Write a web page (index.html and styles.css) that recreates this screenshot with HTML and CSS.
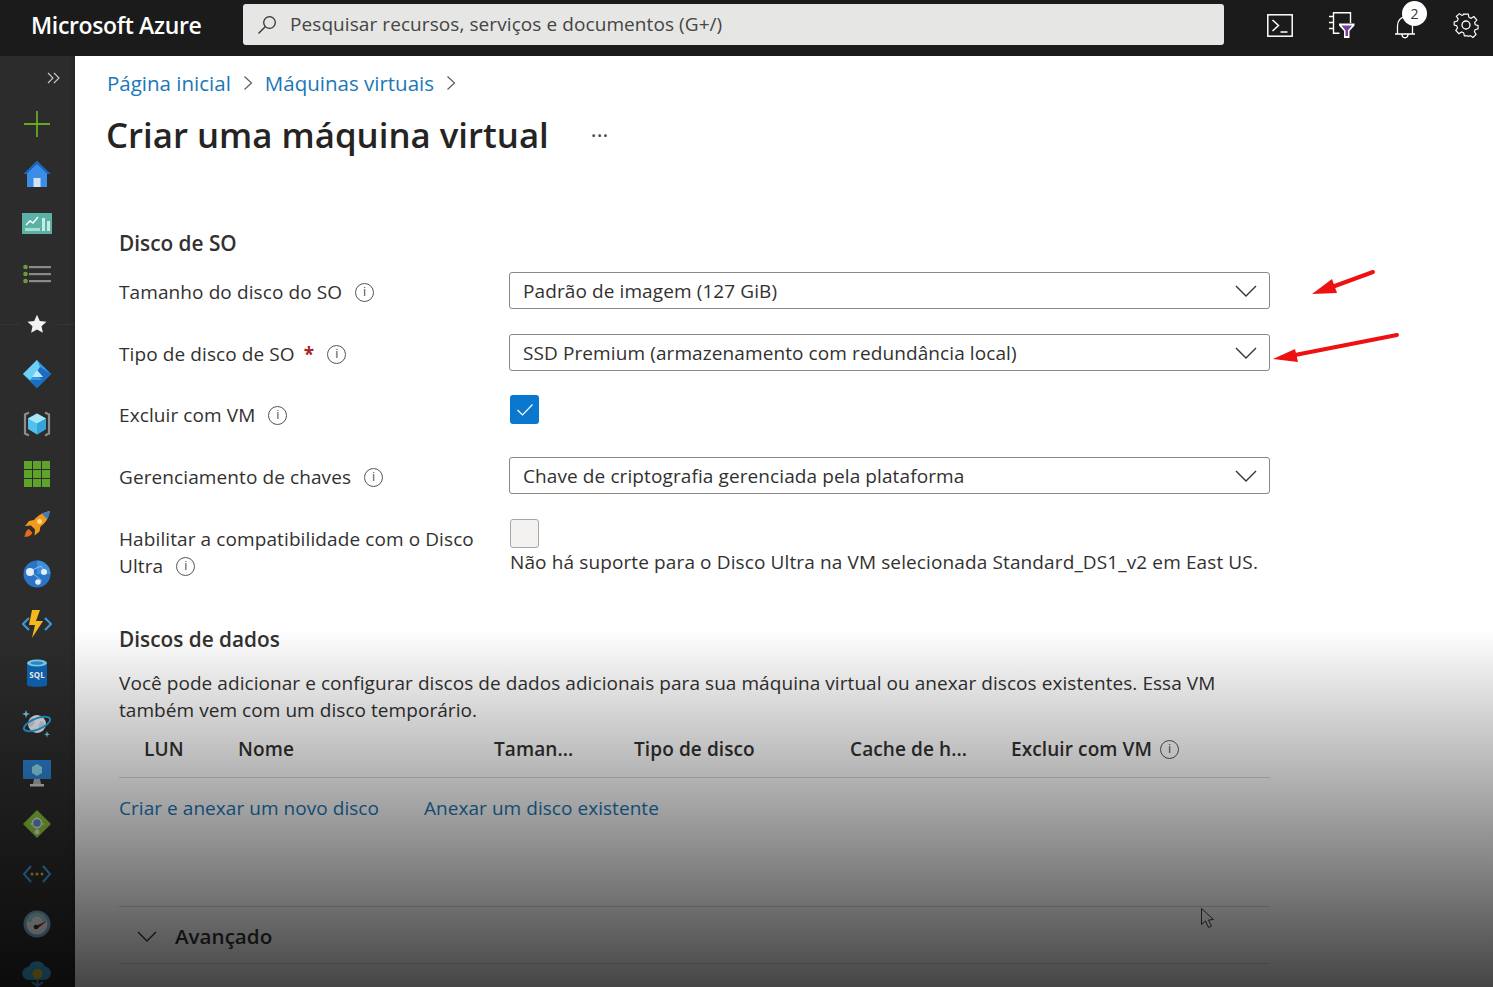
FILE: index.html
```html
<!DOCTYPE html>
<html lang="pt-BR">
<head>
    <meta charset="UTF-8">
    <meta name="viewport" content="width=device-width, initial-scale=1.0">
    <title>Criar uma máquina virtual - Microsoft Azure</title>
    <link rel="stylesheet" href="styles.css">
</head>
<body>
    <header class="topbar">
        <div class="brand">Microsoft Azure</div>
        <div class="search">
            <svg class="search-icon" width="20" height="20" viewBox="0 0 20 20" fill="none" stroke="#333" stroke-width="1.3"><circle cx="12.5" cy="7.5" r="5.8"/><path d="M8.2 11.8 1.5 18.5"/></svg>
            <span>Pesquisar recursos, serviços e documentos (G+/)</span>
        </div>
        <div class="top-icons">
            <svg class="shell-icon" width="26" height="23" viewBox="0 0 26 23" fill="none" stroke="#fff" stroke-width="1.5"><rect x=".8" y=".8" width="24.400" height="21.400"/><path d="M5.500 6l6 5.500-6 5.500M13.500 18h7"/></svg>
            <svg class="filter-icon" width="26" height="26" viewBox="0 0 26 26" fill="none"><path d="M21.500 11V.8H4.500v20.400h6M4.500.8v20.400M0 4.500h4.500M0 10.500h4.500M0 16.500h4.500" stroke="#fff" stroke-width="1.400"/><path d="M10 11.500h15.500v2L20.500 19v7h-5.500v-7L10 13.500z" fill="#fff"/><path d="M12.500 13.500h10.500L19 18.500v5.500h-2.500v-5.500z" fill="#7b3fa0"/></svg>
            <div class="bell">
                <svg width="24" height="26" viewBox="0 0 24 26" fill="none" stroke="#fff" stroke-width="1.3"><path d="M2 21h20M4.500 21v-8c0-5 3-9 7.500-9s7.500 4 7.500 9v8M9 21c0 5 6 5 6 0"/></svg>
                <span class="badge">2</span>
            </div>
            <svg class="gear-icon" width="28" height="28" viewBox="0 0 28 28" fill="none" stroke="#fff" stroke-width="1.3"><circle cx="14" cy="14" r="4"/><path d="M11.500 2h5l.8 3.600 2.300 1 3.200-2 3.200 3.900-2.400 2.800.7 2.400 3.100.9v3.700l-3.300 1-.8 2.200 1.900 3-3.500 3.300-3-2-2.200.9L15.800 26h-3.600l-.8-3.300-2.400-1-2.900 1.900-3.400-3.500 1.900-2.900-1-2.300L.9 14v-3.500l3.500-.9.900-2.400-2-2.800 3.400-3 2.900 1.900 2.100-.9z" transform="translate(1.400 1.400) scale(.9)"/></svg>
        </div>
    </header>

    <div class="shell">
        <nav class="sidebar">
            <div class="nav-collapse">
                <svg width="14" height="12" viewBox="0 0 14 12" fill="none" stroke="#ccc" stroke-width="1.100"><path d="M1 1l5 5-5 5M7 1l5 5-5 5"/></svg>
            </div>
            <div class="nav-item">
                <svg width="28" height="28" viewBox="0 0 28 28" stroke="#68a820" stroke-width="1.800"><path d="M14 1v26M1 14h26"/></svg>
            </div>
            <div class="nav-item">
                <svg width="30" height="30" viewBox="0 0 30 30"><path d="M15 2 1.500 15H5v13h20V15h3.500z" fill="#3b8ee8"/><path d="M15 2 1.500 15h3L15 5l10.500 10h3z" fill="#1a62b8"/><rect x="11.500" y="19" width="7" height="9" fill="#d5e4f5"/></svg>
            </div>
            <div class="nav-item">
                <svg width="30" height="22" viewBox="0 0 30 22"><rect x="0" y="0" width="30" height="21" fill="#5bb2a4"/><path d="M4 12l4-4 3 2 5-6" fill="none" stroke="#fff" stroke-width="1.400"/><rect x="3" y="15" width="15" height="3" fill="#a8dcd2"/><rect x="20" y="5" width="3" height="13" fill="#c5ebe4"/><rect x="25" y="8" width="3" height="10" fill="#c5ebe4"/></svg>
            </div>
            <div class="nav-item">
                <svg width="30" height="20" viewBox="0 0 30 20"><g fill="#6f9a3e"><circle cx="3.500" cy="3" r="2.300"/><circle cx="3.500" cy="10" r="2.300"/><circle cx="3.500" cy="17" r="2.300"/></g><g fill="#8a8a8a"><rect x="7" y="2" width="22" height="2.200"/><rect x="7" y="9" width="22" height="2.200"/><rect x="7" y="16" width="22" height="2.200"/></g></svg>
            </div>
            <div class="nav-item nav-star">
                <svg width="20" height="20" viewBox="0 0 20 20"><path d="M10 .8l2.800 6.200 6.700.7-5 4.500 1.400 6.600L10 15.400l-5.900 3.400 1.400-6.600-5-4.500 6.700-.7z" fill="#f2f2f2"/></svg>
            </div>
            <div class="nav-item">
                <svg width="28" height="28" viewBox="0 0 28 28"><path d="M14 0 0 14l14 14 14-14z" fill="#2f9be8"/><path d="M14 0 0 14l7 6L17 7z" fill="#6fd0f6"/><path d="M17 7l11 7-14 14-7-8 12 0-6-6z" fill="#1b6cc4"/><path d="M14 10l6 7H9z" fill="#bfe8fa"/></svg>
            </div>
            <div class="nav-item">
                <svg width="30" height="28" viewBox="0 0 30 28"><path d="M7 2.500 3 4.500v19l4 2M23 2.500l4 2v19l-4 2" fill="none" stroke="#8c8c8c" stroke-width="2.200"/><path d="M15 3.500l9 5v10.500l-9 5.500-9-5.500V8.500z" fill="#52c0ec"/><path d="M15 3.500l9 5-9 5-9-5z" fill="#a8e6f8"/><path d="M15 13.500v11l9-5.500V8.500z" fill="#34a4dc"/></svg>
            </div>
            <div class="nav-item">
                <svg width="26" height="26" viewBox="0 0 26 26" fill="#5ea32a"><rect width="8" height="8"/><rect x="9" width="8" height="8"/><rect x="18" width="8" height="8"/><rect y="9" width="8" height="8"/><rect x="9" y="9" width="8" height="8"/><rect x="18" y="9" width="8" height="8"/><rect y="18" width="8" height="8"/><rect x="9" y="18" width="8" height="8"/><rect x="18" y="18" width="8" height="8"/></svg>
            </div>
            <div class="nav-item">
                <svg width="28" height="28" viewBox="0 0 28 28" fill="#f29a1f"><path d="M27 1c-6 1-12 4-16 9l-5 1-4 5 6-.5 4 4-.5 6 5-4 1-5c6-4 8-9 9.500-15.500z"/><path d="M27 1c-3 .5-6 1.500-8 3l5 5c1.500-2 2.500-5 3-8z" fill="#3c7dbd"/><path d="M6 19c-3 1-4 5-4.500 8 3 0 6-1 8-4z" fill="#e8691c"/><circle cx="16.500" cy="11.500" r="2.500" fill="#ffd78a"/></svg>
            </div>
            <div class="nav-item">
                <svg width="28" height="28" viewBox="0 0 28 28"><circle cx="14" cy="14" r="13.500" fill="#2b74c8"/><path d="M14 .5A13.500 13.500 0 0 1 27.500 14L14 14z" fill="#3f8fdc"/><path d="M7 11 18 6M7 11l12 10M18 6l5 7" stroke="#8fc0ee" stroke-width="1" fill="none"/><circle cx="7" cy="12" r="4" fill="#e4eef9"/><circle cx="21" cy="12" r="3" fill="#e4eef9"/><circle cx="15" cy="22" r="2.800" fill="#e4eef9"/></svg>
            </div>
            <div class="nav-item">
                <svg width="30" height="28" viewBox="0 0 30 28"><path d="M7 8 1 14l6 6M23 8l6 6-6 6" fill="none" stroke="#3a9bd6" stroke-width="2"/><path d="M18 0h-8l-3 15h6l-3 13 11-17h-7z" fill="#f6b91d"/></svg>
            </div>
            <div class="nav-item">
                <svg width="22" height="30" viewBox="0 0 22 30"><path d="M1 4v22c0 2.500 20 2.500 20 0V4z" fill="#0f68b8"/><ellipse cx="11" cy="4" rx="10" ry="3.500" fill="#7fd4f0"/><ellipse cx="11" cy="4" rx="6.500" ry="1.700" fill="#2a8fcf"/><text x="11" y="19" class="sql-text">SQL</text></svg>
            </div>
            <div class="nav-item">
                <svg width="30" height="28" viewBox="0 0 30 28"><circle cx="15" cy="14" r="9" fill="#e8eef5"/><path d="M8 8c3-2 6 2 4 6s-5 3-6 0M18 12c3-2 5 1 4 4s-5 5-6 2" fill="#c5d3e2"/><ellipse cx="15" cy="14" rx="14" ry="5.500" fill="none" stroke="#2a9bd8" stroke-width="2" transform="rotate(-22 15 14)"/><path d="M4 0l1 3 3 1-3 1-1 3-1-3-3-1 3-1zM25 21l.8 2.500 2.500.8-2.500.8-.8 2.500-.8-2.500-2.500-.8 2.500-.8z" fill="#7fd4f0"/></svg>
            </div>
            <div class="nav-item">
                <svg width="28" height="28" viewBox="0 0 28 28"><rect width="28" height="19" fill="#2e82d6"/><path d="M14 4l5 3v6l-5 3-5-3V7z" fill="#8fdcec"/><path d="M11 19h6l1 5h-8z" fill="#b0b0b0"/><rect x="7" y="24" width="14" height="2.500" fill="#cfcfcf"/></svg>
            </div>
            <div class="nav-item">
                <svg width="30" height="30" viewBox="0 0 30 30"><path d="M15 1 29 15 15 29 1 15z" fill="#8cc63f"/><path d="M15 8v14M8 15h14" stroke="#d3e6b0" stroke-width="1.400"/><circle cx="15" cy="14" r="4.500" fill="#5a8ed0" stroke="#e4efd3" stroke-width="1.400"/><circle cx="15" cy="23" r="2.500" fill="#e4efd3"/></svg>
            </div>
            <div class="nav-item">
                <svg width="30" height="20" viewBox="0 0 30 20"><path d="M9 2 2 10l7 8M21 2l7 8-7 8" fill="none" stroke="#3c9fe4" stroke-width="2"/><g fill="#d9c233"><circle cx="10" cy="10" r="1.500"/><circle cx="15" cy="10" r="1.500"/><circle cx="20" cy="10" r="1.500"/></g></svg>
            </div>
            <div class="nav-item">
                <svg width="28" height="28" viewBox="0 0 28 28"><circle cx="14" cy="14" r="13.500" fill="#7fa9cc"/><circle cx="14" cy="14" r="10.500" fill="#f2f2f2"/><path d="M4.500 12a9.500 9.500 0 0 1 19 0h-4a5.500 5.500 0 0 0-11 0z" fill="#9fd8d8"/><path d="M12 16 24 11l-10 8z" fill="#a03040"/><circle cx="13" cy="17" r="2.300" fill="#333"/></svg>
            </div>
            <div class="nav-item">
                <svg width="30" height="30" viewBox="0 0 30 30"><path d="M7 21a6.500 6.500 0 0 1-.5-13A9 9 0 0 1 23 7.500 6.800 6.800 0 0 1 23 21z" fill="#3fb0e0"/><circle cx="15.500" cy="15" r="5" fill="#f0c32e"/><path d="M15.500 20v10M10 23l5.500 4 5.500-4" stroke="#3fb0e0" stroke-width="2" fill="none"/></svg>
            </div>
        </nav>

        <main class="content">
            <div class="breadcrumb">
                <a href="#">Página inicial</a>
                <svg width="10" height="16" viewBox="0 0 10 16" fill="none" stroke="#555" stroke-width="1.100"><path d="M1.500 1.500 8.500 8l-7 6.500"/></svg>
                <a href="#">Máquinas virtuais</a>
                <svg width="10" height="16" viewBox="0 0 10 16" fill="none" stroke="#555" stroke-width="1.100"><path d="M1.500 1.500 8.500 8l-7 6.500"/></svg>
            </div>
            <div class="title-row">
                <h1>Criar uma máquina virtual</h1>
                <span class="more">···</span>
            </div>

            <section class="form">
                <h2 class="section-first">Disco de SO</h2>

                <div class="form-row">
                    <label>Tamanho do disco do SO <i class="info">i</i></label>
                    <div class="select">Padrão de imagem (127 GiB)<svg width="22" height="12" viewBox="0 0 22 12" fill="none" stroke="#333" stroke-width="1.400"><path d="M1 1l10 10L21 1"/></svg></div>
                </div>
                <div class="form-row">
                    <label>Tipo de disco de SO <b class="req">*</b> <i class="info">i</i></label>
                    <div class="select">SSD Premium (armazenamento com redundância local)<svg width="22" height="12" viewBox="0 0 22 12" fill="none" stroke="#333" stroke-width="1.400"><path d="M1 1l10 10L21 1"/></svg></div>
                </div>
                <div class="form-row row-check">
                    <label>Excluir com VM <i class="info">i</i></label>
                    <div class="checkbox checked">
                        <svg width="18" height="14" viewBox="0 0 18 14" fill="none" stroke="#fff" stroke-width="1.200"><path d="M1.500 7l5 5L16.500 1.500"/></svg>
                    </div>
                </div>
                <div class="form-row">
                    <label>Gerenciamento de chaves <i class="info">i</i></label>
                    <div class="select">Chave de criptografia gerenciada pela plataforma<svg width="22" height="12" viewBox="0 0 22 12" fill="none" stroke="#333" stroke-width="1.400"><path d="M1 1l10 10L21 1"/></svg></div>
                </div>
                <div class="form-row row-ultra">
                    <label>Habilitar a compatibilidade com o Disco Ultra <i class="info">i</i></label>
                    <div>
                        <div class="checkbox"></div>
                        <p class="hint">Não há suporte para o Disco Ultra na VM selecionada Standard_DS1_v2 em East US.</p>
                    </div>
                </div>

                <h2 class="section-data">Discos de dados</h2>
                <p class="desc">Você pode adicionar e configurar discos de dados adicionais para sua máquina virtual ou anexar discos existentes. Essa VM também vem com um disco temporário.</p>

                <div class="disk-head">
                    <span>LUN</span>
                    <span>Nome</span>
                    <span>Taman...</span>
                    <span>Tipo de disco</span>
                    <span>Cache de h...</span>
                    <span>Excluir com VM<i class="info">i</i></span>
                </div>
                <div class="disk-links">
                    <a href="#">Criar e anexar um novo disco</a>
                    <a href="#">Anexar um disco existente</a>
                </div>

                <div class="advanced">
                    <svg width="20" height="11" viewBox="0 0 20 11" fill="none" stroke="#333" stroke-width="1.400"><path d="M1 1l9 9 9-9"/></svg>
                    <span>Avançado</span>
                </div>
            </section>
        </main>
    </div>

    <!-- fade over the bottom of the page, as in the video frame -->
    <div class="fade"></div>

    <!-- red arrows and mouse pointer drawn on top of the capture -->
    <svg class="marks" width="1493" height="987" viewBox="0 0 1493 987">
        <path d="M1373 272 1332 287" stroke="#ee1111" stroke-width="4" stroke-linecap="round"/>
        <path d="M1312 294 1332 279 1337 293z" fill="#ee1111"/>
        <path d="M1397 335 1295 355" stroke="#ee1111" stroke-width="4" stroke-linecap="round"/>
        <path d="M1273 359 1295 349 1298 362z" fill="#ee1111"/>
        <path d="M1201.500 908.500v16l4-3.500 3 6.500 3-1.500-3-6 5-.5z" fill="none" stroke="#1a1a1a" stroke-width="1"/>
    </svg>
</body>
</html>
```

FILE: styles.css
```css
html, body {
    margin: 0;
    height: 100%;
}

body {
    position: relative;
    height: 987px;
    overflow: hidden;
    font-family: "Open Sans", "Noto Sans", sans-serif;
    font-size: 19px;
    letter-spacing: 0.1px;
    color: #323130;
    background-color: #fff;
}

.topbar {
    display: flex;
    align-items: center;
    height: 56px;
    background-color: #1b1b1b;
    color: #fff;
}

.brand {
    width: 243px;
    margin-top: -7px;
    padding-left: 31px;
    box-sizing: border-box;
    font-size: 23px;
    font-weight: 600;
    letter-spacing: -0.35px;
}

.search {
    display: flex;
    align-items: center;
    gap: 13px;
    width: 981px;
    height: 41px;
    margin-top: -7px;
    padding-left: 14px;
    box-sizing: border-box;
    background-color: #e6e6e4;
    border-radius: 3px;
    color: #444;
    letter-spacing: 0.08px;
}

.search span {
    margin-top: -2px;
}

.top-icons {
    display: flex;
    align-items: center;
    flex: 1;
    height: 100%;
}

.shell-icon {
    margin-left: 43px;
    margin-top: -6px;
}

.filter-icon {
    margin-left: 36px;
    margin-top: -7px;
}

.bell {
    position: relative;
    display: flex;
    margin-left: 38px;
    margin-top: -4px;
}

.badge {
    position: absolute;
    top: -12px;
    left: 9px;
    width: 25px;
    height: 25px;
    border-radius: 50%;
    background-color: #fff;
    color: #333;
    font-size: 14px;
    line-height: 25px;
    text-align: center;
}

.gear-icon {
    margin-left: 35px;
    margin-top: -6px;
}

.shell {
    display: flex;
    height: 931px;
}

.sidebar {
    flex: 0 0 75px;
    overflow: hidden;
    background: linear-gradient(to right, #2c2c2c 92%, #262626);
}

.nav-collapse {
    display: flex;
    align-items: center;
    justify-content: flex-end;
    height: 43px;
    padding-right: 14px;
}

.nav-item {
    display: flex;
    align-items: center;
    justify-content: center;
    width: 74px;
    height: 50px;
}

.nav-star {
    justify-content: space-between;
}

.nav-star::before,
.nav-star::after {
    content: "";
    width: 20px;
    height: 1px;
    background-color: #353535;
}

.sql-text {
    fill: #fff;
    font-size: 8px;
    font-weight: 700;
    text-anchor: middle;
}

.content {
    flex: 1;
    padding: 12px 0 0 32px;
    overflow: hidden;
}

a {
    color: #1a77b8;
    text-decoration: none;
}

.breadcrumb {
    display: flex;
    align-items: center;
    gap: 12px;
    height: 30px;
    font-size: 20.500px;
    letter-spacing: 0;
}

.title-row {
    display: flex;
    align-items: center;
    height: 50px;
    margin-top: 11px;
}

h1 {
    margin: 0 0 0 -1px;
    font-size: 34.800px;
    font-weight: 600;
    letter-spacing: 0;
    color: #252423;
}

.more {
    margin-left: 42px;
    font-size: 22px;
    color: #444;
}

.form {
    width: 1151px;
    margin-left: 12px;
}

h2 {
    height: 30px;
    margin: 0;
    font-size: 20.800px;
    font-weight: 600;
    line-height: 30px;
    letter-spacing: 0;
    color: #323130;
}

.section-first {
    margin-top: 69px;
    margin-bottom: 14px;
}

.form-row {
    display: grid;
    grid-template-columns: 390px 761px;
    align-items: center;
    height: 37px;
    margin-bottom: 25px;
}

.form-row label {
    padding-top: 2px;
}

.row-check {
    height: 36px;
}

.row-ultra {
    align-items: start;
    height: auto;
    margin-bottom: 0;
}

.form-row.row-ultra label {
    padding-top: 7px;
    padding-right: 20px;
    line-height: 27px;
}

.info {
    display: inline-block;
    width: 17px;
    height: 17px;
    margin-left: 8px;
    border: 1px solid #555;
    border-radius: 50%;
    font-family: "Liberation Sans", sans-serif;
    font-size: 12px;
    font-style: normal;
    font-weight: 400;
    line-height: 17px;
    text-align: center;
    vertical-align: 3px;
    color: #555;
}

.req {
    margin-left: 4px;
    color: #a4262c;
}

.select {
    display: flex;
    align-items: center;
    justify-content: space-between;
    height: 37px;
    padding: 0 12px 0 13px;
    box-sizing: border-box;
    border: 1px solid #8a8886;
    border-radius: 3px;
}

.checkbox {
    width: 29px;
    height: 29px;
    margin-left: 1px;
    box-sizing: border-box;
    border: 1px solid #a8a6a4;
    border-radius: 3px;
    background-color: #f3f2f1;
}

.checkbox.checked {
    display: flex;
    align-items: center;
    justify-content: center;
    margin-top: -9px;
    border: none;
    background-color: #0b78d0;
}

.hint {
    margin: 1px 0 0 1px;
    line-height: 27px;
    letter-spacing: 0.12px;
    white-space: nowrap;
}

.section-data {
    margin-top: 44px;
}

.desc {
    margin: 16px 0 0;
    line-height: 27px;
    letter-spacing: 0.06px;
}

.disk-head {
    display: grid;
    grid-template-columns: 94px 256px 140px 216px 161px 1fr;
    align-items: center;
    height: 54px;
    padding-left: 25px;
    padding-bottom: 3px;
    box-sizing: border-box;
    border-bottom: 1px solid #d8d8d8;
    font-weight: 600;
}

.disk-links {
    display: flex;
    gap: 45px;
    margin-top: 15px;
    line-height: 30px;
    letter-spacing: 0.05px;
}

.advanced {
    display: flex;
    align-items: center;
    gap: 18px;
    height: 58px;
    margin-top: 83px;
    padding-left: 18px;
    padding-top: 2px;
    box-sizing: border-box;
    border-top: 1px solid #d8d8d8;
    border-bottom: 1px solid #d8d8d8;
    font-size: 20.600px;
    font-weight: 600;
    letter-spacing: 0;
}

.fade {
    position: absolute;
    left: 0;
    right: 0;
    top: 630px;
    bottom: 0;
    background: linear-gradient(to bottom, rgba(0, 0, 0, 0), rgba(0, 0, 0, 0.73));
    pointer-events: none;
}

.marks {
    position: absolute;
    left: 0;
    top: 0;
    pointer-events: none;
}
```
